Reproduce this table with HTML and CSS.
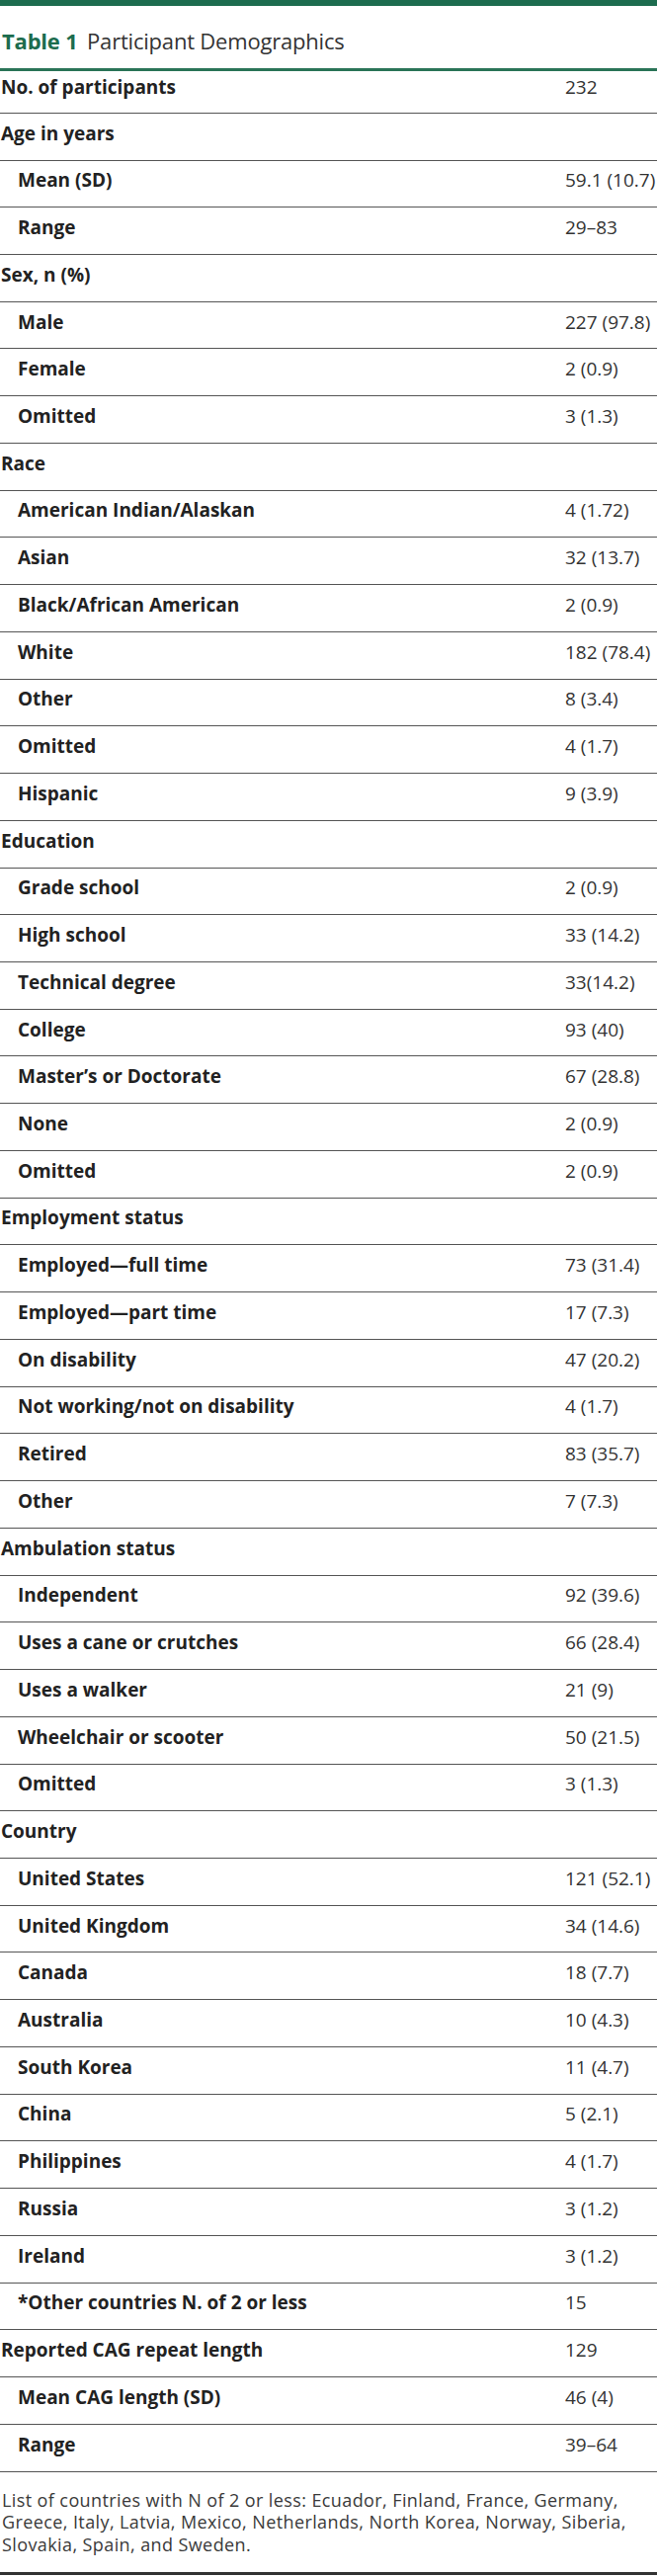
FILE: index.html
```html
<!DOCTYPE html>
<html lang="en">
<head>
<meta charset="utf-8">
<title>Table 1 Participant Demographics</title>
<link rel="stylesheet" href="styles.css">
</head>
<body>
<div class="topbar"></div>
<h1 class="title"><span class="num">Table 1</span> Participant Demographics</h1>
<div class="table">
  <div class="row first"><div class="label">No. of participants</div><div class="val">232</div></div>
  <div class="row"><div class="label">Age in years</div><div class="val"></div></div>
  <div class="row"><div class="label sub">Mean (SD)</div><div class="val">59.1 (10.7)</div></div>
  <div class="row"><div class="label sub">Range</div><div class="val">29–83</div></div>
  <div class="row"><div class="label">Sex, n (%)</div><div class="val"></div></div>
  <div class="row"><div class="label sub">Male</div><div class="val">227 (97.8)</div></div>
  <div class="row"><div class="label sub">Female</div><div class="val">2 (0.9)</div></div>
  <div class="row"><div class="label sub">Omitted</div><div class="val">3 (1.3)</div></div>
  <div class="row"><div class="label">Race</div><div class="val"></div></div>
  <div class="row"><div class="label sub">American Indian/Alaskan</div><div class="val">4 (1.72)</div></div>
  <div class="row"><div class="label sub">Asian</div><div class="val">32 (13.7)</div></div>
  <div class="row"><div class="label sub">Black/African American</div><div class="val">2 (0.9)</div></div>
  <div class="row"><div class="label sub">White</div><div class="val">182 (78.4)</div></div>
  <div class="row"><div class="label sub">Other</div><div class="val">8 (3.4)</div></div>
  <div class="row"><div class="label sub">Omitted</div><div class="val">4 (1.7)</div></div>
  <div class="row"><div class="label sub">Hispanic</div><div class="val">9 (3.9)</div></div>
  <div class="row"><div class="label">Education</div><div class="val"></div></div>
  <div class="row"><div class="label sub">Grade school</div><div class="val">2 (0.9)</div></div>
  <div class="row"><div class="label sub">High school</div><div class="val">33 (14.2)</div></div>
  <div class="row"><div class="label sub">Technical degree</div><div class="val">33(14.2)</div></div>
  <div class="row"><div class="label sub">College</div><div class="val">93 (40)</div></div>
  <div class="row"><div class="label sub">Master’s or Doctorate</div><div class="val">67 (28.8)</div></div>
  <div class="row"><div class="label sub">None</div><div class="val">2 (0.9)</div></div>
  <div class="row"><div class="label sub">Omitted</div><div class="val">2 (0.9)</div></div>
  <div class="row"><div class="label">Employment status</div><div class="val"></div></div>
  <div class="row"><div class="label sub">Employed—full time</div><div class="val">73 (31.4)</div></div>
  <div class="row"><div class="label sub">Employed—part time</div><div class="val">17 (7.3)</div></div>
  <div class="row"><div class="label sub">On disability</div><div class="val">47 (20.2)</div></div>
  <div class="row"><div class="label sub">Not working/not on disability</div><div class="val">4 (1.7)</div></div>
  <div class="row"><div class="label sub">Retired</div><div class="val">83 (35.7)</div></div>
  <div class="row"><div class="label sub">Other</div><div class="val">7 (7.3)</div></div>
  <div class="row"><div class="label">Ambulation status</div><div class="val"></div></div>
  <div class="row"><div class="label sub">Independent</div><div class="val">92 (39.6)</div></div>
  <div class="row"><div class="label sub">Uses a cane or crutches</div><div class="val">66 (28.4)</div></div>
  <div class="row"><div class="label sub">Uses a walker</div><div class="val">21 (9)</div></div>
  <div class="row"><div class="label sub">Wheelchair or scooter</div><div class="val">50 (21.5)</div></div>
  <div class="row"><div class="label sub">Omitted</div><div class="val">3 (1.3)</div></div>
  <div class="row"><div class="label">Country</div><div class="val"></div></div>
  <div class="row"><div class="label sub">United States</div><div class="val">121 (52.1)</div></div>
  <div class="row"><div class="label sub">United Kingdom</div><div class="val">34 (14.6)</div></div>
  <div class="row"><div class="label sub">Canada</div><div class="val">18 (7.7)</div></div>
  <div class="row"><div class="label sub">Australia</div><div class="val">10 (4.3)</div></div>
  <div class="row"><div class="label sub">South Korea</div><div class="val">11 (4.7)</div></div>
  <div class="row"><div class="label sub">China</div><div class="val">5 (2.1)</div></div>
  <div class="row"><div class="label sub">Philippines</div><div class="val">4 (1.7)</div></div>
  <div class="row"><div class="label sub">Russia</div><div class="val">3 (1.2)</div></div>
  <div class="row"><div class="label sub">Ireland</div><div class="val">3 (1.2)</div></div>
  <div class="row"><div class="label sub">*Other countries N. of 2 or less</div><div class="val">15</div></div>
  <div class="row"><div class="label">Reported CAG repeat length</div><div class="val">129</div></div>
  <div class="row"><div class="label sub">Mean CAG length (SD)</div><div class="val">46 (4)</div></div>
  <div class="row"><div class="label sub">Range</div><div class="val">39–64</div></div>
</div>
<p class="note">List of countries with N of 2 or less: Ecuador, Finland, France, Germany, Greece, Italy, Latvia, Mexico, Netherlands, North Korea, Norway, Siberia, Slovakia, Spain, and Sweden.</p>
<div class="endrule"></div>
</body>
</html>
```
FILE: styles.css
```css
html, body {
  margin: 0;
  padding: 0;
  background: #ffffff;
}

body {
  font-family: "Open Sans", "DejaVu Sans", sans-serif;
  color: #222222;
  width: 665px;
}

.topbar {
  height: 6px;
  background: #1c6c4e;
}

.title {
  margin: 19px 0 0;
  padding-left: 2px;
  font-size: 22px;
  line-height: 33px;
  letter-spacing: -0.2px;
  font-weight: 400;
  color: #333333;
}

.title .num {
  font-weight: 700;
  color: #1c6c4e;
  margin-right: 4px;
}

.table {
  margin-top: 11.3px;
  border-top: 3px solid #2a7457;
}

.row {
  display: grid;
  grid-template-columns: 572px 1fr;
  height: 47.74px;
  box-sizing: border-box;
  padding-top: 6.8px;
  border-bottom: 1px solid #555555;
  font-size: 19px;
  line-height: 27px;
}

.row.first {
  height: 42.5px;
  padding-top: 2.9px;
}

.label {
  font-weight: 700;
  color: #222222;
  padding-left: 1px;
  white-space: nowrap;
}

.label.sub {
  padding-left: 18px;
}

.val {
  font-weight: 400;
  color: #333333;
  white-space: nowrap;
}

.note {
  margin: 17.4px 0 0;
  padding-left: 2px;
  font-size: 18px;
  line-height: 22.5px;
  letter-spacing: 0.4px;
  color: #3a3a3a;
}

.endrule {
  margin-top: 17px;
  border-top: 3px solid #333333;
}
```
